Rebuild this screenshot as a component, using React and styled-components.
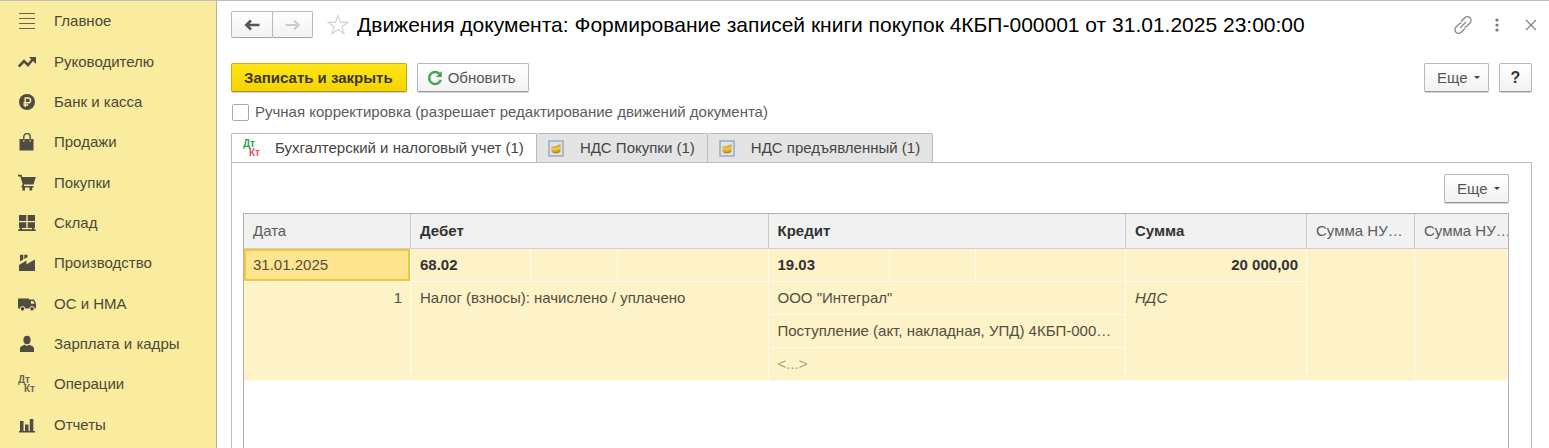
import React, { useState } from "react";
import styled, { createGlobalStyle } from "styled-components";

const icons = {
  main: (
    <g stroke="currentColor" strokeWidth="1.2" opacity="0.85">
      <path d="M1 1.500h16M1 6.500h16M1 11.500h16M1 16.500h16" />
    </g>
  ),
  trend: (
    <>
      <path d="M.8 13.500 6 8l4 4 5-6" fill="none" stroke="currentColor" strokeWidth="2.6" />
      <path d="M11 4h7v7z" fill="currentColor" />
    </>
  ),
  bank: (
    <>
      <circle cx="9" cy="9" r="8" fill="currentColor" />
      <path d="M7.2 14V5h3a2.3 2.3 0 0 1 0 4.8H5.4M5.4 12h4.800" fill="none" stroke="#faec9f" strokeWidth="1.4" />
    </>
  ),
  bag: (
    <>
      <path d="M1.500 6h3.500v2.500h1.500V6h5v2.500H13V6h2.500v11.500h-14z" fill="currentColor" />
      <path d="M5.800 7.500V3.600a3.200 3 0 0 1 6.400 0v3.900" fill="none" stroke="currentColor" strokeWidth="1.400" />
    </>
  ),
  cart: (
    <>
      <path d="M0 .8h3.500l.8 2.200h13.500L15.500 10.500H4.800L2.300 2.600H0z" fill="currentColor" />
      <path d="M3.500 12h12v1.500h-1.300v3h-2.700v-3H7v3H4.300v-3h-.8zM4.500 10h1.500v2.500H4z" fill="currentColor" />
    </>
  ),
  stock: <path d="M1 1h7.300v6H1zM9.700 1H17v6H9.700zM1 8.300h7.300v5.700H1zM9.700 8.300H17v5.700H9.700zM.3 15.200h17.400V17H.3zM2 14h2v2H2zM14 14h2v2h-2z" fill="currentColor" />,
  factory: <path d="M1 17v-6l7.500-4.500v3.700L17 5.500V17zM2 .8h3.300v4.700L2 7.500zM6.300.8h3.200v2.400L6.300 5z" fill="currentColor" />,
  truck: (
    <>
      <path d="M0 3.500h11v10H0z" fill="currentColor" />
      <path d="M11 4.500h5l2 4v5h-7z" fill="currentColor" />
      <path d="M13 6h2.300l1.200 2.800H13z" fill="#faec9f" />
      <circle cx="4.500" cy="13.800" r="2.300" fill="currentColor" stroke="#faec9f" />
      <circle cx="14" cy="13.800" r="2.300" fill="currentColor" stroke="#faec9f" />
    </>
  ),
  person: (
    <>
      <ellipse cx="9" cy="5" rx="3.600" ry="4.300" fill="currentColor" />
      <path d="M2 17v-3.500c0-2.200 3-3 5-3.800L9 11l2-1.300c2 .8 5 1.600 5 3.800V17z" fill="currentColor" />
    </>
  ),
  chart: <path d="M2 5h3.500v10H2zM7 8.500h3.500V15H7zM11.800 3h3.500v12h-3.500zM1 15h16v1.500H1z" fill="currentColor" />,
};

const sections = [
  { icon: "main", label: "Главное" },
  { icon: "trend", label: "Руководителю" },
  { icon: "bank", label: "Банк и касса" },
  { icon: "bag", label: "Продажи" },
  { icon: "cart", label: "Покупки" },
  { icon: "stock", label: "Склад" },
  { icon: "factory", label: "Производство" },
  { icon: "truck", label: "ОС и НМА" },
  { icon: "person", label: "Зарплата и кадры" },
  { icon: "dtkt", label: "Операции" },
  { icon: "chart", label: "Отчеты" },
];

const tabs = [
  { id: "acc", label: "Бухгалтерский и налоговый учет (1)" },
  { id: "buy", label: "НДС Покупки (1)" },
  { id: "vat", label: "НДС предъявленный (1)" },
];

function DtKt({ dt, kt }) {
  return (
    <svg width="20" height="18" viewBox="0 0 20 18" fontFamily="Liberation Sans, Arial, sans-serif" fontSize="10" fontWeight="bold" aria-hidden="true">
      <text x="0" y="8" fill={dt}>Дт</text>
      <text x="6" y="17" fill={kt}>Кт</text>
    </svg>
  );
}

function RegisterIcon() {
  return (
    <svg width="16" height="17" viewBox="0 0 16 17" aria-hidden="true">
      <rect x="1" y="1" width="14" height="15" fill="#dfe4ea" stroke="#9aaabd" strokeWidth="1.500" />
      <path d="M3.500 6c1 .8 2.500.8 4 0L12.500 4v8c-2 2-7 2-9 0z" fill="#dcb02c" />
      <path d="M4 8.500c2 1 5 .8 8-1" stroke="#f7e27c" fill="none" />
      <path d="M5 12c2.500.8 5 .5 7-1" stroke="#9c7a1c" fill="none" />
    </svg>
  );
}

function SectionIcon({ name }) {
  if (name === "dtkt") return <DtKt dt="#6b6749" kt="#6b6749" />;
  return (
    <svg width="18" height="18" viewBox="0 0 18 18" aria-hidden="true">
      {icons[name]}
    </svg>
  );
}

export default function App() {
  const [manual, setManual] = useState(false);
  const [active, setActive] = useState("acc");

  return (
    <>
      <GlobalStyle />
      <Page>
        <Sidebar>
          {sections.map((item) => (
            <SectionLink href="#" key={item.label}>
              <IconSlot>
                <SectionIcon name={item.icon} />
              </IconSlot>
              {item.label}
            </SectionLink>
          ))}
        </Sidebar>
        <Main>
          <Header>
            <NavGroup>
              <NavBtn aria-label="Назад">
                <svg width="16" height="12" viewBox="0 0 16 12">
                  <path d="M15.500 6H3M7 1.500 2.200 6 7 10.500" fill="none" stroke="#555" strokeWidth="2.400" />
                </svg>
              </NavBtn>
              <NavBtn aria-label="Вперед">
                <svg width="16" height="12" viewBox="0 0 16 12">
                  <path d="M.5 6H13M9 1.500 13.800 6 9 10.500" fill="none" stroke="#ccc" strokeWidth="2.200" />
                </svg>
              </NavBtn>
            </NavGroup>
            <IconBtn aria-label="В избранное">
              <svg width="22" height="22" viewBox="0 0 22 22">
                <path d="M11 1.500 13.400 8.400H20.700L14.900 12.700 17 19.800 11 15.500 5 19.800 7.100 12.700 1.300 8.400H8.600z" fill="none" stroke="#d2d2d2" strokeWidth="1.200" />
              </svg>
            </IconBtn>
            <Title>Движения документа: Формирование записей книги покупок 4КБП-000001 от 31.01.2025 23:00:00</Title>
            <WindowTools>
              <IconBtn aria-label="Получить ссылку">
                <svg width="20" height="20" viewBox="0 0 20 20" fill="none" stroke="#8a8a8a" strokeWidth="1.400" strokeLinecap="round">
                  <path d="M8.500 6 11.800 2.700a3.600 3.600 0 0 1 5.200 5.200L13.700 11.200q-.8.700-1.800.9" />
                  <path d="M11.500 14 8.200 17.300a3.600 3.600 0 0 1-5.200-5.200L6.300 8.800q.8-.7 1.800-.9M7.500 12.500l5-5" />
                </svg>
              </IconBtn>
              <IconBtn aria-label="Меню">
                <svg width="8" height="14" viewBox="0 0 8 14" fill="#777">
                  <circle cx="2" cy="2" r="1.600" />
                  <circle cx="2" cy="7" r="1.600" />
                  <circle cx="2" cy="12" r="1.600" />
                </svg>
              </IconBtn>
              <IconBtn aria-label="Закрыть">
                <svg width="12" height="12" viewBox="0 0 12 12">
                  <path d="M1 1l10 10M11 1 1 11" stroke="#888" strokeWidth="1.400" />
                </svg>
              </IconBtn>
            </WindowTools>
          </Header>

          <Toolbar>
            <PrimaryBtn>Записать и закрыть</PrimaryBtn>
            <Btn>
              <svg width="16" height="16" viewBox="0 0 16 16" aria-hidden="true">
                <path d="M12.500 3.800A6 6 0 1 0 13.800 10" fill="none" stroke="#3ea652" strokeWidth="2.400" />
                <path d="M14.800 1v6H8.800z" fill="#3ea652" />
              </svg>
              Обновить
            </Btn>
            <Spacer />
            <MoreBtn>
              Еще <Caret />
            </MoreBtn>
            <HelpBtn aria-label="Справка">?</HelpBtn>
          </Toolbar>

          <CheckRow>
            <Checkbox type="checkbox" checked={manual} onChange={(e) => setManual(e.target.checked)} />
            Ручная корректировка (разрешает редактирование движений документа)
          </CheckRow>

          <TabBar role="tablist">
            {tabs.map((tab) => (
              <Tab key={tab.id} role="tab" aria-selected={active === tab.id} $active={active === tab.id} onClick={() => setActive(tab.id)}>
                <TabIcon>{tab.id === "acc" ? <DtKt dt="#2f9e58" kt="#e0525a" /> : <RegisterIcon />}</TabIcon>
                {tab.label}
              </Tab>
            ))}
          </TabBar>

          <Panel role="tabpanel">
            <PanelTools>
              <MoreBtn>
                Еще <Caret />
              </MoreBtn>
            </PanelTools>
            <TableFrame>
              <Table>
                <colgroup>
                  <Col $w={167} />
                  <Col $w={120} />
                  <Col $w={87} />
                  <Col />
                  <Col $w={121} />
                  <Col $w={86} />
                  <Col />
                  <Col $w={181} />
                  <Col $w={108} />
                  <Col $w={93} />
                </colgroup>
                <thead>
                  <tr>
                    <Th>Дата</Th>
                    <Th colSpan={3} $bold>Дебет</Th>
                    <Th colSpan={3} $bold>Кредит</Th>
                    <Th $bold>Сумма</Th>
                    <Th>Сумма НУ…</Th>
                    <Th>Сумма НУ…</Th>
                  </tr>
                </thead>
                <tbody>
                  <tr>
                    <SelectedTd>31.01.2025</SelectedTd>
                    <Td $bold>68.02</Td>
                    <Td />
                    <Td />
                    <Td $bold>19.03</Td>
                    <Td />
                    <Td />
                    <Td $bold $right>20 000,00</Td>
                    <Td rowSpan={4} />
                    <Td rowSpan={4} />
                  </tr>
                  <tr>
                    <Td rowSpan={3} $right>1</Td>
                    <Td rowSpan={3} colSpan={3}>Налог (взносы): начислено / уплачено</Td>
                    <Td colSpan={3}>ООО "Интеграл"</Td>
                    <Td rowSpan={3} $italic>НДС</Td>
                  </tr>
                  <tr>
                    <Td colSpan={3}>Поступление (акт, накладная, УПД) 4КБП-000…</Td>
                  </tr>
                  <tr>
                    <Td colSpan={3} $muted>&lt;...&gt;</Td>
                  </tr>
                </tbody>
              </Table>
            </TableFrame>
          </Panel>
        </Main>
      </Page>
    </>
  );
}

const GlobalStyle = createGlobalStyle`
  * {
    box-sizing: border-box;
  }
  body {
    margin: 0;
    background: #fff;
    color: #4a4a4a;
    font: 15px/20px "Liberation Sans", Arial, sans-serif;
  }
  button {
    font: inherit;
    color: inherit;
    cursor: pointer;
  }
  svg {
    display: block;
    flex: none;
  }
`;

const Page = styled.div`
  display: flex;
  min-height: 100vh;
  border-top: 1px solid #bdbdbd;
`;

const Sidebar = styled.nav`
  display: flex;
  flex-direction: column;
  flex: none;
  width: 217px;
  padding-bottom: 3px;
  background: #faec9f;
  border-right: 1px solid #b5b3a6;
`;

const SectionLink = styled.a`
  display: flex;
  flex: 1;
  align-items: center;
  gap: 18px;
  min-height: 40px;
  padding-left: 18px;
  color: #4b4838;
  text-decoration: none;
`;

const IconSlot = styled.span`
  width: 18px;
  color: #504c41;
`;

const Main = styled.main`
  display: flex;
  flex: 1;
  flex-direction: column;
  min-width: 0;
  padding: 10px 17px 0 14px;
`;

const Header = styled.header`
  display: flex;
  align-items: center;
  height: 27px;
  margin-right: -5px;
`;

const NavGroup = styled.div`
  display: flex;
  margin-right: 14px;
`;

const NavBtn = styled.button`
  display: flex;
  align-items: center;
  justify-content: center;
  width: 42px;
  height: 27px;
  padding: 0;
  border: 1px solid #b8b8b8;
  border-bottom-color: #a3a3a3;
  border-radius: 2px;
  background: linear-gradient(#fff, #f2f2f2);

  & + & {
    width: 41px;
    margin-left: -1px;
  }
`;

const IconBtn = styled.button`
  padding: 0;
  border: 0;
  background: none;
`;

const Title = styled.h1`
  flex: 1;
  min-width: 0;
  margin: 0 0 0 8px;
  overflow: hidden;
  color: #000;
  font-size: 21px;
  font-weight: normal;
  line-height: 27px;
  text-overflow: ellipsis;
  white-space: nowrap;
`;

const WindowTools = styled.div`
  display: flex;
  align-items: center;
  gap: 22px;
`;

const Toolbar = styled.div`
  display: flex;
  gap: 10px;
  margin-top: 25px;
`;

const Spacer = styled.div`
  flex: 1;
`;

const Btn = styled.button`
  display: flex;
  align-items: center;
  gap: 5px;
  height: 29px;
  padding: 0 12px 0 9px;
  border: 1px solid #b8b8b8;
  border-bottom-color: #999;
  border-radius: 2px;
  background: linear-gradient(#fff, #f2f2f2);
  box-shadow: 0 1px 0 #d4d4d4;
  color: #555;
`;

const PrimaryBtn = styled(Btn)`
  padding: 0 13px 0 12px;
  border-color: #c9ab10;
  border-bottom-color: #a8922c;
  background: linear-gradient(#ffe617, #f5d400);
  color: #3b3720;
  font-weight: bold;
`;

const MoreBtn = styled(Btn)`
  justify-content: space-between;
  width: 65px;
  padding: 0 8px 0 12px;
`;

const Caret = styled.span`
  border: 3px solid transparent;
  border-top-color: #444;
  border-bottom: 0;
`;

const HelpBtn = styled(Btn)`
  justify-content: center;
  width: 33px;
  padding: 0;
  color: #333;
  font-size: 16px;
  font-weight: bold;
`;

const CheckRow = styled.label`
  display: flex;
  align-items: center;
  gap: 6px;
  margin-top: 10px;
  padding-left: 1px;
  color: #5c5c5c;
`;

const Checkbox = styled.input`
  width: 17px;
  height: 17px;
  margin: 0;
  appearance: none;
  border: 1px solid #a9a9a9;
  border-radius: 2px;
  background: #fff;

  &:checked {
    background: #f5d400;
  }
`;

const TabBar = styled.div`
  display: flex;
  margin-top: 11px;
`;

const Tab = styled.button`
  display: flex;
  align-items: center;
  height: 30px;
  padding: 0 12px 0 11px;
  border: 1px solid #b9b9b9;
  border-left-width: ${({ $active }) => ($active ? "1px" : "0")};
  border-bottom-color: ${({ $active }) => ($active ? "#fff" : "#b9b9b9")};
  border-radius: 2px 2px 0 0;
  background: ${({ $active }) => ($active ? "#fff" : "#e4e4e4")};
  color: #444;
  white-space: nowrap;
`;

const TabIcon = styled.span`
  width: 20px;
  margin-right: 12px;
`;

const Panel = styled.section`
  display: flex;
  flex: 1;
  flex-direction: column;
  margin-top: -1px;
  padding: 11px 22px 0 11px;
  border: 1px solid #bdbdbd;
  border-bottom: 0;
`;

const PanelTools = styled.div`
  display: flex;
  justify-content: flex-end;
  margin-bottom: 10px;
`;

const TableFrame = styled.div`
  flex: 1;
  overflow: hidden;
  border: 1px solid #b0b0b0;
  border-bottom: 0;
`;

const Table = styled.table`
  width: 100%;
  table-layout: fixed;
  border-collapse: separate;
  border-spacing: 0;
`;

const Col = styled.col`
  width: ${({ $w }) => ($w ? `${$w}px` : "auto")};
`;

const Th = styled.th`
  height: 35px;
  padding: 0 0 0 9px;
  overflow: hidden;
  border-right: 1px solid #c8c8c8;
  border-bottom: 1px solid #cfcfcf;
  background: #f1f1f1;
  color: ${({ $bold }) => ($bold ? "#333" : "#5c5c5c")};
  font-weight: ${({ $bold }) => ($bold ? "bold" : "normal")};
  text-align: left;
  white-space: nowrap;

  &:last-child {
    border-right: 0;
  }
`;

const Td = styled.td`
  height: 33px;
  padding: 6px 8px 5px 9px;
  overflow: hidden;
  border-right: 1px solid #fffaf0;
  border-bottom: 1px solid #fffaf0;
  background: #fdf2c8;
  color: ${({ $bold, $muted }) => ($bold ? "#333" : $muted ? "#a59f8a" : "#524e41")};
  font-weight: ${({ $bold }) => ($bold ? "bold" : "normal")};
  font-style: ${({ $italic }) => ($italic ? "italic" : "normal")};
  text-align: ${({ $right }) => ($right ? "right" : "left")};
  text-overflow: ellipsis;
  vertical-align: top;
  white-space: nowrap;
`;

const SelectedTd = styled(Td)`
  background: #ffe48f;
  box-shadow: inset 0 0 0 2px #f0c93a;
`;
